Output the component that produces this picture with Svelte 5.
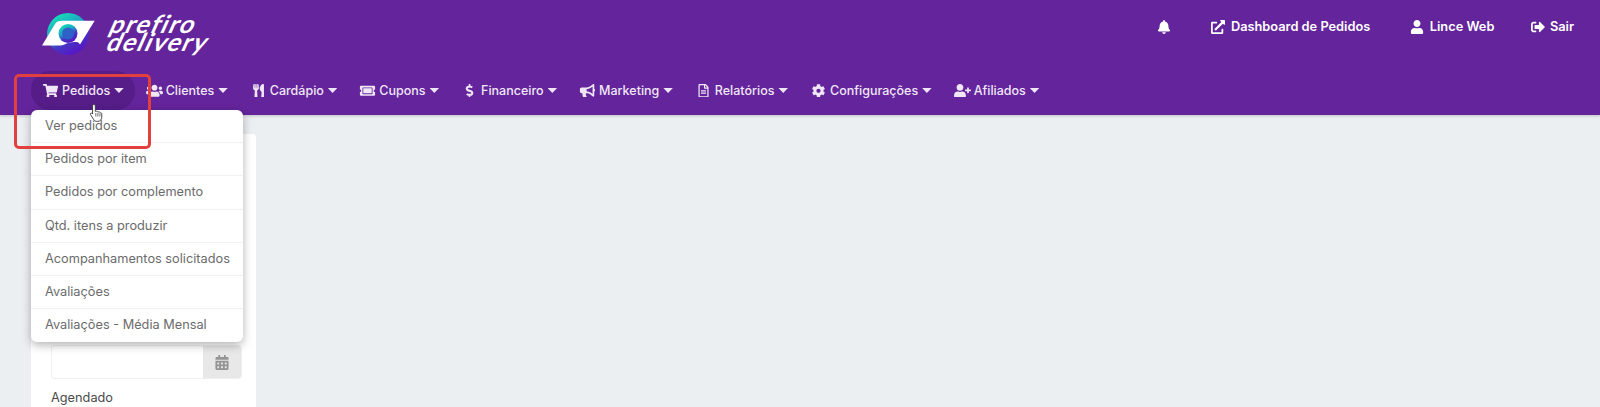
<script>
  const icons = {
    cart: ['0 0 576 512', 'M528.12 301.319l47.273-208C578.806 78.301 567.391 64 551.99 64H159.208l-9.166-44.81C147.758 8.021 137.93 0 126.529 0H24C10.745 0 0 10.745 0 24v16c0 13.255 10.745 24 24 24h69.883l70.248 343.435C147.325 417.1 136 435.222 136 456c0 30.928 25.072 56 56 56s56-25.072 56-56c0-15.674-6.447-29.835-16.824-40h209.647C430.447 426.165 424 440.326 424 456c0 30.928 25.072 56 56 56s56-25.072 56-56c0-22.172-12.888-41.332-31.579-50.405l5.517-24.276c3.413-15.018-8.002-29.319-23.403-29.319H218.117l-6.545-32h293.145c11.206 0 20.92-7.754 23.403-18.681z'],
    users: ['0 0 640 512', 'M96 224c35.3 0 64-28.7 64-64s-28.7-64-64-64-64 28.7-64 64 28.7 64 64 64zm448 0c35.3 0 64-28.7 64-64s-28.7-64-64-64-64 28.7-64 64 28.7 64 64 64zm32 32h-64c-17.6 0-33.5 7.1-45.1 18.6 40.3 22.1 68.9 62 75.1 109.4h66c17.7 0 32-14.3 32-32v-32c0-35.3-28.7-64-64-64zm-256 0c61.9 0 112-50.1 112-112S381.9 32 320 32 208 82.1 208 144s50.1 112 112 112zm76.8 32h-8.3c-20.8 10-43.9 16-68.5 16s-47.6-6-68.5-16h-8.3C179.6 288 128 339.6 128 403.2V432c0 26.5 21.5 48 48 48h288c26.5 0 48-21.5 48-48v-28.8c0-63.6-51.6-115.2-115.2-115.2zm-223.7-13.4C161.5 263.1 145.6 256 128 256H64c-35.3 0-64 28.7-64 64v32c0 17.7 14.3 32 32 32h65.9c6.3-47.4 34.9-87.3 75.2-109.4z'],
    utensils: ['0 0 416 512', 'M207.9 15.2c.8 4.7 16.1 94.5 16.1 128.8 0 52.3-27.8 89.6-68.9 104.6L168 486.7c.7 13.7-10.2 25.3-24 25.3H80c-13.7 0-24.7-11.5-24-25.3l12.9-238.1C27.7 233.6 0 196.2 0 144 0 109.6 15.3 19.9 16.1 15.2 19.3-5.1 61.4-5.4 64 16.3v141.2c1.3 3.4 15.1 3.2 16 0 1.4-25.3 7.9-139.2 8-141.8 3.3-20.8 44.7-20.8 47.9 0 .2 2.7 6.6 116.5 8 141.8.9 3.2 14.8 3.4 16 0V16.3c2.6-21.6 44.8-21.4 48-1.1zm119.2 285.7l-15 185.1c-1.2 14 9.9 26 23.9 26h56c13.3 0 24-10.7 24-24V24c0-13.2-10.7-24-24-24-82.5 0-221.4 178.5-64.9 300.9z'],
    ticket: ['0 0 576 512', 'M128 160h320v192H128V160zm400 96c0 26.51 21.49 48 48 48v96c0 26.51-21.49 48-48 48H48c-26.51 0-48-21.49-48-48v-96c26.51 0 48-21.49 48-48s-21.49-48-48-48v-96c0-26.51 21.49-48 48-48h480c26.51 0 48 21.49 48 48v96c-26.51 0-48 21.49-48 48zm-48-104c0-13.255-10.745-24-24-24H120c-13.255 0-24 10.745-24 24v208c0 13.255 10.745 24 24 24h336c13.255 0 24-10.745 24-24V152z'],
    dollar: ['0 0 288 512', 'M209.2 233.4l-108-31.6C88.7 198.2 80 186.5 80 173.5c0-16.3 13.2-29.5 29.5-29.5h66.3c12.2 0 24.2 3.7 34.2 10.5 6.1 4.1 14.3 3.1 19.5-2l34.8-34c7.1-6.9 6.1-18.4-1.8-24.5C238 74.8 207.4 64.1 176 64V16c0-8.8-7.2-16-16-16h-32c-8.8 0-16 7.2-16 16v48h-2.5C45.8 64-5.4 118.7.5 183.6c4.2 46.1 39.4 83.6 83.8 96.6l102.5 30c12.5 3.7 21.2 15.3 21.2 28.3 0 16.3-13.2 29.5-29.5 29.5h-66.3C100 368 88 364.3 78 357.5c-6.1-4.1-14.3-3.1-19.5 2l-34.8 34c-7.1 6.9-6.1 18.4 1.8 24.5 24.5 19.2 55.1 29.9 86.5 30v48c0 8.8 7.2 16 16 16h32c8.8 0 16-7.2 16-16v-48.2c46.6-.9 90.3-28.6 105.7-72.7 21.5-61.6-14.6-124.8-72.5-141.7z'],
    bullhorn: ['0 0 576 512', 'M576 240c0-23.63-12.95-44.04-32-55.12V32.01C544 23.26 537.02 0 512 0c-7.12 0-14.19 2.38-19.98 7.02l-85.03 68.03C364.28 109.19 310.66 128 256 128H64c-35.35 0-64 28.65-64 64v96c0 35.35 28.65 64 64 64h33.7c-1.39 10.48-2.18 21.14-2.18 32 0 39.77 9.26 77.35 25.56 110.94 5.19 10.69 16.52 17.06 28.4 17.06h74.28c26.05 0 41.69-29.84 25.9-50.56-16.4-21.52-26.15-48.36-26.15-77.44 0-11.11 1.62-21.79 4.41-32H256c54.66 0 108.28 18.81 150.98 52.95l85.03 68.03a32.023 32.023 0 0 0 19.98 7.02c24.92 0 32-22.78 32-32V295.13C563.05 284.04 576 263.63 576 240zm-96 141.42l-33.05-26.44C392.95 311.78 325.12 288 256 288v-96c69.12 0 136.95-23.78 190.95-66.98L480 98.58v282.84z'],
    file: ['0 0 384 512', 'M288 248v28c0 6.6-5.4 12-12 12H108c-6.6 0-12-5.4-12-12v-28c0-6.6 5.4-12 12-12h168c6.6 0 12 5.4 12 12zm-12 72H108c-6.6 0-12 5.4-12 12v28c0 6.6 5.4 12 12 12h168c6.6 0 12-5.4 12-12v-28c0-6.6-5.4-12-12-12zm108-188.1V464c0 26.5-21.5 48-48 48H48c-26.5 0-48-21.5-48-48V48C0 21.5 21.5 0 48 0h204.1C264.8 0 277 5.1 286 14.1L369.9 98c9 8.9 14.1 21.2 14.1 33.9zm-128-80V128h76.1L256 51.9zM336 464V176H232c-13.3 0-24-10.7-24-24V48H48v416h288z'],
    cog: ['0 0 512 512', 'M487.4 315.7l-42.6-24.6c4.3-23.2 4.3-47 0-70.2l42.6-24.6c4.9-2.8 7.1-8.6 5.5-14-11.1-35.6-30-67.8-54.7-94.6-3.8-4.1-10-5.1-14.8-2.3L380.8 110c-17.9-15.4-38.5-27.3-60.8-35.1V25.8c0-5.6-3.9-10.5-9.4-11.7-36.7-8.2-74.3-7.8-109.2 0-5.5 1.2-9.4 6.1-9.4 11.7V75c-22.2 7.9-42.8 19.8-60.8 35.1L88.7 85.5c-4.9-2.8-11-1.9-14.8 2.3-24.7 26.7-43.6 58.9-54.7 94.6-1.7 5.4.6 11.2 5.5 14L67.3 221c-4.3 23.2-4.3 47 0 70.2l-42.6 24.6c-4.9 2.8-7.1 8.6-5.5 14 11.1 35.6 30 67.8 54.7 94.6 3.8 4.1 10 5.1 14.8 2.3l42.6-24.6c17.9 15.4 38.5 27.3 60.8 35.1v49.2c0 5.6 3.9 10.5 9.4 11.7 36.7 8.2 74.3 7.8 109.2 0 5.5-1.2 9.4-6.1 9.4-11.7v-49.2c22.2-7.9 42.8-19.8 60.8-35.1l42.6 24.6c4.9 2.8 11 1.9 14.8-2.3 24.7-26.7 43.6-58.9 54.7-94.6 1.5-5.5-.7-11.3-5.6-14.1zM256 336c-44.1 0-80-35.9-80-80s35.9-80 80-80 80 35.9 80 80-35.9 80-80 80z'],
    userPlus: ['0 0 640 512', 'M624 208h-64v-64c0-8.8-7.2-16-16-16h-32c-8.8 0-16 7.2-16 16v64h-64c-8.8 0-16 7.2-16 16v32c0 8.8 7.2 16 16 16h64v64c0 8.8 7.2 16 16 16h32c8.8 0 16-7.2 16-16v-64h64c8.8 0 16-7.2 16-16v-32c0-8.8-7.2-16-16-16zm-400 48c70.7 0 128-57.3 128-128S294.7 0 224 0 96 57.3 96 128s57.3 128 128 128zm89.6 32h-16.7c-22.2 10.2-46.9 16-72.9 16s-50.6-5.8-72.9-16h-16.7C60.2 288 0 348.2 0 422.4V464c0 26.5 21.5 48 48 48h352c26.5 0 48-21.5 48-48v-41.6c0-74.2-60.2-134.4-134.4-134.4z'],
    bell: ['0 0 448 512', 'M224 512c35.32 0 63.97-28.65 63.97-64H160.03c0 35.35 28.65 64 63.97 64zm215.39-149.71c-19.32-20.76-55.47-51.99-55.47-154.29 0-77.7-54.48-139.9-127.94-155.16V32c0-17.67-14.32-32-31.98-32s-31.98 14.33-31.98 32v20.84C118.56 68.1 64.08 130.3 64.08 208c0 102.3-36.15 133.53-55.47 154.29-6 6.45-8.66 14.16-8.61 21.71.11 16.4 12.98 32 32.1 32h383.8c19.12 0 32-15.6 32.1-32 .05-7.55-2.61-15.27-8.61-21.71z'],
    external: ['0 0 512 512', 'M432,320H400a16,16,0,0,0-16,16V448H64V128H208a16,16,0,0,0,16-16V80a16,16,0,0,0-16-16H48A48,48,0,0,0,0,112V464a48,48,0,0,0,48,48H400a48,48,0,0,0,48-48V336A16,16,0,0,0,432,320ZM488,0h-128c-21.37,0-32.05,25.91-17,41l35.73,35.73L135,320.37a24,24,0,0,0,0,34L157.67,377a24,24,0,0,0,34,0L435.28,133.32,471,169c15,15,41,4.5,41-17V24A24,24,0,0,0,488,0Z'],
    user: ['0 0 448 512', 'M224 256c70.7 0 128-57.3 128-128S294.7 0 224 0 96 57.3 96 128s57.3 128 128 128zm89.6 32h-16.7c-22.2 10.2-46.9 16-72.9 16s-50.6-5.8-72.9-16h-16.7C60.2 288 0 348.2 0 422.4V464c0 26.5 21.5 48 48 48h352c26.5 0 48-21.5 48-48v-41.6c0-74.2-60.2-134.4-134.4-134.4z'],
    signOut: ['0 0 512 512', 'M497 273L329 441c-15 15-41 4.5-41-17v-96H152c-13.3 0-24-10.7-24-24v-96c0-13.3 10.7-24 24-24h136V88c0-21.4 25.9-32 41-17l168 168c9.3 9.4 9.3 24.6 0 34zM192 436v-40c0-6.6-5.4-12-12-12H96c-17.7 0-32-14.3-32-32V160c0-17.7 14.3-32 32-32h84c6.6 0 12-5.4 12-12V76c0-6.6-5.4-12-12-12H96c-53 0-96 43-96 96v192c0 53 43 96 96 96h84c6.6 0 12-5.4 12-12z'],
    calendar: ['0 0 448 512', 'M0 464c0 26.5 21.5 48 48 48h352c26.5 0 48-21.5 48-48V192H0v272zm320-196c0-6.6 5.4-12 12-12h40c6.6 0 12 5.4 12 12v40c0 6.6-5.4 12-12 12h-40c-6.6 0-12-5.4-12-12v-40zm0 128c0-6.6 5.4-12 12-12h40c6.6 0 12 5.4 12 12v40c0 6.6-5.4 12-12 12h-40c-6.6 0-12-5.4-12-12v-40zM192 268c0-6.6 5.4-12 12-12h40c6.6 0 12 5.4 12 12v40c0 6.6-5.4 12-12 12h-40c-6.6 0-12-5.4-12-12v-40zm0 128c0-6.6 5.4-12 12-12h40c6.6 0 12 5.4 12 12v40c0 6.6-5.4 12-12 12h-40c-6.6 0-12-5.4-12-12v-40zM64 268c0-6.6 5.4-12 12-12h40c6.6 0 12 5.4 12 12v40c0 6.6-5.4 12-12 12H76c-6.6 0-12-5.4-12-12v-40zm0 128c0-6.6 5.4-12 12-12h40c6.6 0 12 5.4 12 12v40c0 6.6-5.4 12-12 12H76c-6.6 0-12-5.4-12-12v-40zM400 64h-48V16c0-8.8-7.2-16-16-16h-32c-8.8 0-16 7.2-16 16v48H160V16c0-8.8-7.2-16-16-16h-32c-8.8 0-16 7.2-16 16v48H48C21.5 64 0 85.5 0 112v48h448v-48c0-26.5-21.5-48-48-48z']
  };

  const menu = [
    { label: 'Pedidos', icon: 'cart', active: true },
    { label: 'Clientes', icon: 'users' },
    { label: 'Cardápio', icon: 'utensils' },
    { label: 'Cupons', icon: 'ticket' },
    { label: 'Financeiro', icon: 'dollar' },
    { label: 'Marketing', icon: 'bullhorn' },
    { label: 'Relatórios', icon: 'file' },
    { label: 'Configurações', icon: 'cog' },
    { label: 'Afiliados', icon: 'userPlus' }
  ];

  const topLinks = [
    { label: 'Dashboard de Pedidos', icon: 'external' },
    { label: 'Lince Web', icon: 'user' },
    { label: 'Sair', icon: 'signOut' }
  ];

  const pedidos = [
    'Ver pedidos',
    'Pedidos por item',
    'Pedidos por complemento',
    'Qtd. itens a produzir',
    'Acompanhamentos solicitados',
    'Avaliações',
    'Avaliações - Média Mensal'
  ];
</script>

{#snippet icon(name)}
  <svg class="ico" viewBox={icons[name][0]} aria-hidden="true"><path fill="currentColor" d={icons[name][1]} /></svg>
{/snippet}

<div class="page">
  <header class="topo">
    <div class="linha-topo">
      <div class="logo">
        <svg class="logo-marca" viewBox="0 0 54 44" aria-hidden="true">
          <defs>
            <linearGradient id="anel" x1="0.15" y1="0.05" x2="0.7" y2="1">
              <stop offset="0" stop-color="#17e2b4" />
              <stop offset="0.4" stop-color="#1ca3c6" />
              <stop offset="0.65" stop-color="#4438c4" />
              <stop offset="1" stop-color="#5a12c4" />
            </linearGradient>
          </defs>
          <circle cx="26" cy="21" r="21" fill="url(#anel)" />
          <path d="M0 32.500 L13 11 Q15 7.700 20 7.700 L52.700 7.700 L38 31.500 C36 28 33 29 26 30 C23 31 21 32.500 18 32.500 Z" fill="#fff" />
          <circle cx="26" cy="20.500" r="9.500" fill="url(#anel)" />
          <circle cx="26" cy="20.500" r="6" fill="#2f62c8" />
        </svg>
        <div class="logo-texto"><span>prefiro</span><span class="l2">delivery</span></div>
      </div>
      <nav class="links-topo">
        <a class="sino" href="#top">{@render icon('bell')}</a>
        {#each topLinks as l}
          <a href="#top">{@render icon(l.icon)}{l.label}</a>
        {/each}
      </nav>
    </div>
    <nav class="menu">
      {#each menu as m}
        <a class="item" class:ativo={m.active} href="#top">
          {@render icon(m.icon)}<span>{m.label}</span><i class="caret"></i>
        </a>
      {/each}
    </nav>
  </header>

  <main class="conteudo">
    <section class="card">
      <div class="campo">
        <input type="text" aria-label="Data" />
        <span class="addon">{@render icon('calendar')}</span>
      </div>
      <label class="rotulo" for="agendado">Agendado</label>
    </section>
  </main>

  <ul class="dropdown">
    {#each pedidos as p}
      <li>{p}</li>
    {/each}
  </ul>

  <div class="destaque"></div>
  <svg class="cursor" viewBox="0 0 18 22" aria-hidden="true">
    <path d="M5.5 1.5c1 0 1.6.7 1.6 1.7v6l.6-.2c.6-.2 1.3 0 1.6.5.6-.3 1.4-.1 1.7.5.7-.3 1.5 0 1.8.7.8-.2 1.6.4 1.6 1.3v3.4c0 2.8-1.6 5-4.4 5H8.6c-1.5 0-2.5-.7-3.3-2L1.6 12.600c-.5-.9.6-2 1.600-1.300l.8.8V3.200c0-1 .6-1.700 1.500-1.700z" fill="#fff" stroke="#333" stroke-width="1" />
    <path d="M7.700 11v4M10 11v4M12.300 11.500V15" stroke="#333" stroke-width="0.800" fill="none" />
  </svg>
</div>

<style>
  :global(body) {
    margin: 0;
    background: #ebeff2;
  }

  .page {
    position: relative;
    height: 407px;
    overflow: hidden;
    font-family: Inter, "Noto Sans", sans-serif;
    font-size: 12.75px;
  }

  .topo {
    background: #64249b;
    height: 115px;
    box-shadow: 0 1px 3px rgba(0, 0, 0, 0.2);
  }

  .linha-topo {
    display: flex;
    justify-content: space-between;
    align-items: flex-start;
    height: 71px;
  }

  .logo {
    display: flex;
    align-items: flex-start;
    gap: 12px;
    padding: 13px 0 0 42px;
  }

  .logo-marca {
    width: 54px;
    height: 44px;
  }

  .logo-texto {
    display: flex;
    flex-direction: column;
    color: #fff;
    font-family: Lato, sans-serif;
    font-weight: 700;
    font-size: 25px;
    line-height: 18px;
    letter-spacing: 1.500px;
    transform: skewX(-24deg);
    margin-top: 1px;
  }

  .logo-texto .l2 {
    padding-left: 5px;
  }

  .links-topo {
    display: flex;
    align-items: center;
    padding: 19px 26px 0 0;
    gap: 39.500px;
  }

  .links-topo a {
    display: flex;
    align-items: center;
    gap: 6px;
    color: #fff;
    text-decoration: none;
    font-weight: 600;
    font-size: 12.800px;
  }

  .links-topo a:last-child {
    margin-left: -3px;
    gap: 5px;
  }

  .links-topo .ico {
    width: 14px;
    height: 14px;
  }

  .menu {
    display: flex;
    padding-left: 31px;
    align-items: center;
  }

  .item {
    display: flex;
    align-items: center;
    gap: 3px;
    height: 39px;
    padding: 0 11px;
    border-radius: 19px;
    color: #efe6f6;
    text-decoration: none;
    font-weight: 500;
    font-size: 12.500px;
  }

  .item.ativo {
    background: #561d88;
  }

  .item .ico {
    width: 17px;
    height: 13.500px;
  }

  .caret {
    width: 9.500px;
    height: 5px;
    margin-left: 1px;
    background: currentColor;
    clip-path: polygon(0 0, 100% 0, 50% 100%);
  }

  .conteudo {
    padding: 19px 0 0 31px;
  }

  .card {
    width: 225px;
    height: 300px;
    background: #fff;
    border-radius: 4px;
    box-sizing: border-box;
    padding: 211px 14px 0 20px;
  }

  .campo {
    display: flex;
    height: 32px;
    border: 1px solid #edeff1;
    border-radius: 3px;
  }

  .campo input {
    flex: 1;
    min-width: 0;
    border: 0;
    outline: 0;
    background: transparent;
  }

  .addon {
    display: flex;
    align-items: center;
    justify-content: center;
    width: 38px;
    background: #e8e8e8;
    color: #949494;
    border-radius: 0 3px 3px 0;
  }

  .addon .ico {
    width: 14px;
    height: 15px;
  }

  .rotulo {
    display: block;
    margin-top: 11px;
    color: #4a4a4a;
    font-size: 12.750px;
  }

  .dropdown {
    position: absolute;
    left: 31px;
    top: 110px;
    width: 212px;
    margin: 0;
    padding: 0;
    list-style: none;
    background: #fff;
    border-radius: 6px;
    box-shadow: 0 3px 10px rgba(0, 0, 0, 0.3);
    color: #6b6b6b;
  }

  .dropdown li {
    height: 33.200px;
    line-height: 32px;
    padding-left: 14px;
    border-bottom: 1px solid #f1f1f1;
    box-sizing: border-box;
  }

  .dropdown li:last-child {
    border-bottom: 0;
  }

  .destaque {
    position: absolute;
    left: 14px;
    top: 74px;
    width: 137px;
    height: 75px;
    box-sizing: border-box;
    border: 3px solid #e2403f;
    border-radius: 5px;
  }

  .cursor {
    position: absolute;
    left: 89px;
    top: 103px;
    width: 16px;
    height: 20px;
  }
</style>
